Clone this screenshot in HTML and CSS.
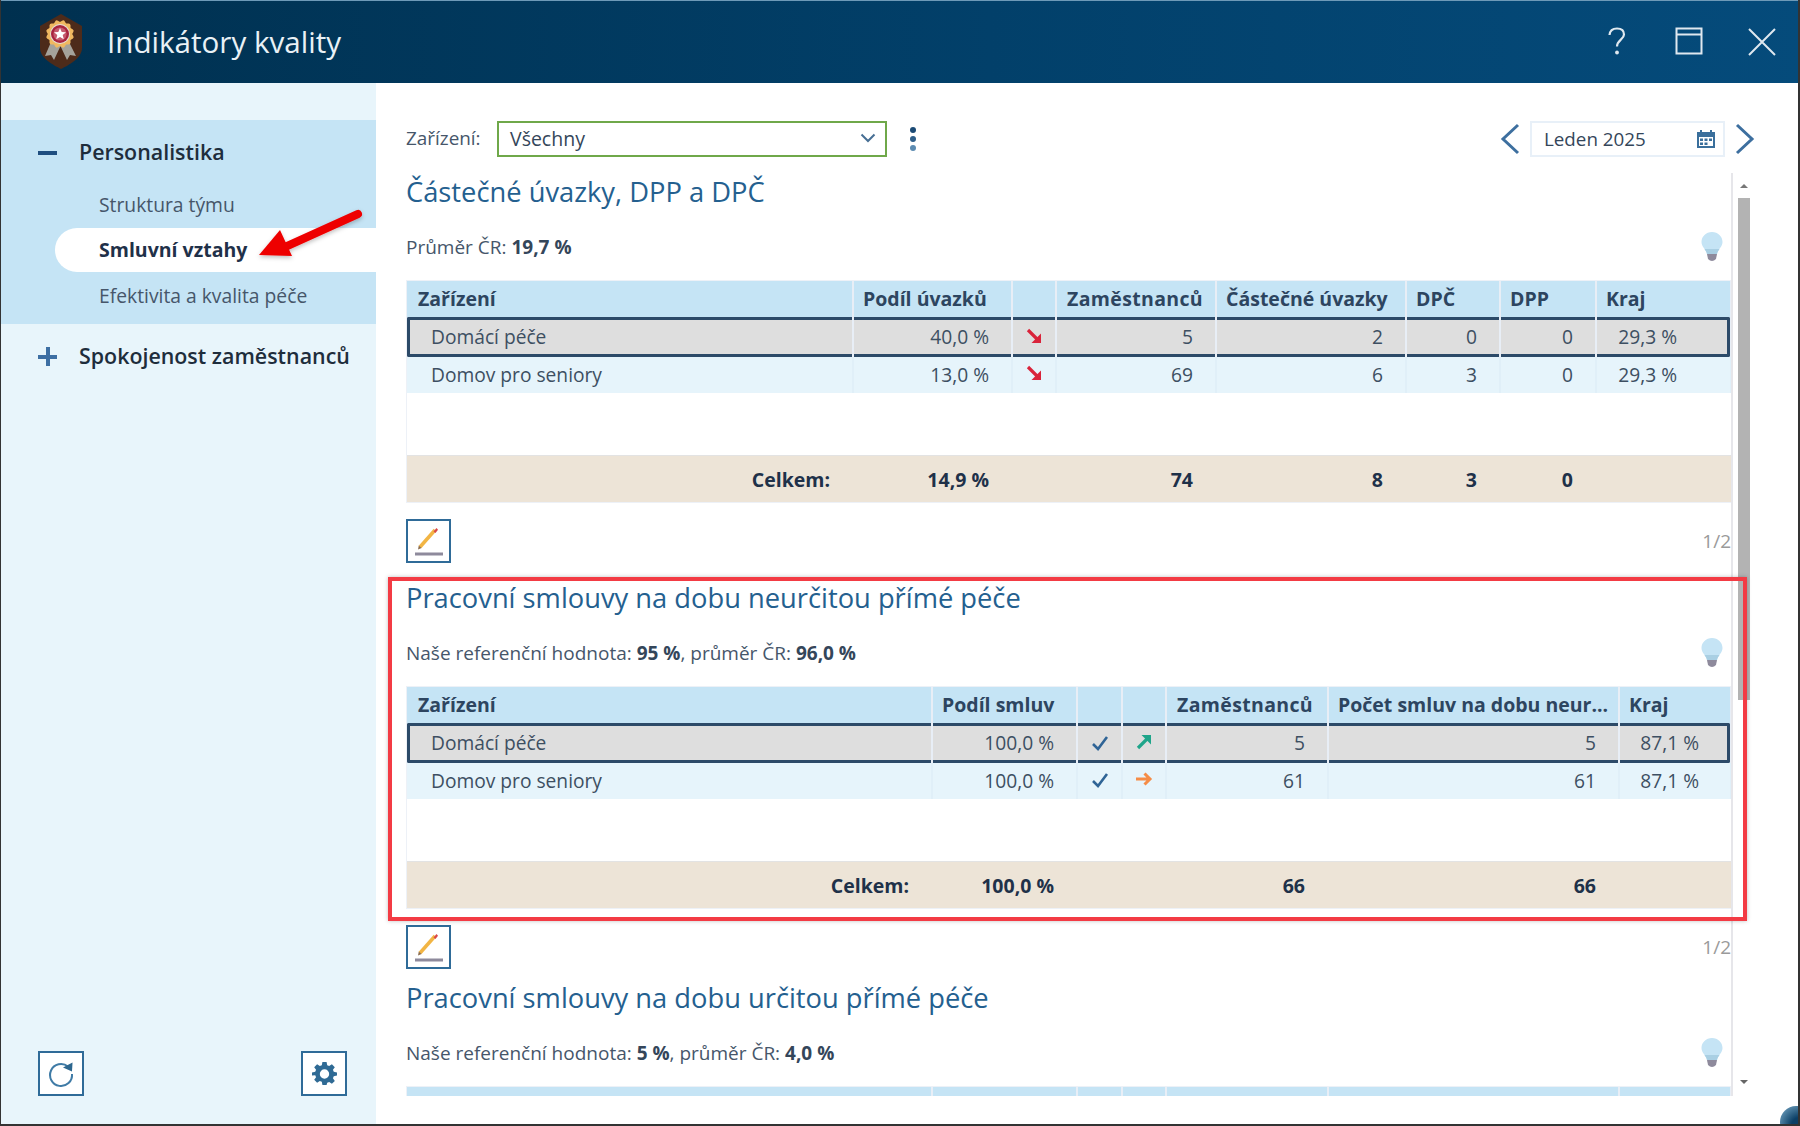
FILE: index.html
```html
<!DOCTYPE html>
<html lang="cs">
<head>
<meta charset="utf-8">
<title>Indikátory kvality</title>
<link rel="stylesheet" href="styles.css">
</head>
<body>
<div class="window">
  <header class="titlebar">
    <svg class="logo" viewBox="0 0 44 56" width="44" height="56">
      <path d="M22 0 L43 12 V34 C43 44 30 51 22 55 C14 51 1 44 1 34 V12 Z" fill="#4d2b1a"/>
      <path d="M12 28 L6 42 L12 41 L15 46 L22 31 Z M30 28 L37 42 L31 41 L28 46 L21 31 Z" fill="#a5a39b"/>
      <g fill="#f0b860">
        <rect x="10.5" y="9.5" width="21" height="21" rx="2"/>
        <rect x="10.5" y="9.5" width="21" height="21" rx="2" transform="rotate(30 21 20)"/>
        <rect x="10.5" y="9.5" width="21" height="21" rx="2" transform="rotate(60 21 20)"/>
      </g>
      <circle cx="21" cy="20" r="10" fill="#e3e0d8"/>
      <circle cx="21" cy="20" r="9" fill="#a8243f"/>
      <circle cx="21" cy="20" r="6.6" fill="#c55a6d"/>
      <path d="M21 14 L22.7 18 L27 18.3 L23.7 21.1 L24.8 25.3 L21 23 L17.2 25.3 L18.3 21.1 L15 18.3 L19.3 18 Z" fill="#fff"/>
    </svg>
    <h1 class="app-title">Indikátory kvality</h1>
    <div class="win-controls">
      <svg width="20" height="30" viewBox="0 0 20 30" class="ic-help"><path d="M2.5 8 C3 3 6 1.5 10 1.5 C14.5 1.5 17 4 17 7.5 C17 12.5 10 13 10 19.5" fill="none" stroke="#dfe8ef" stroke-width="2.2"/><circle cx="10" cy="25.5" r="1.9" fill="#dfe8ef"/></svg>
      <svg width="28" height="28" viewBox="0 0 28 28" class="ic-max"><path d="M1.5 1.5 H26.5 V26.5 H1.5 Z M1.5 7.5 H26.5" fill="none" stroke="#dfe8ef" stroke-width="2"/></svg>
      <svg width="30" height="30" viewBox="0 0 30 30" class="ic-close"><path d="M2 2 L28 28 M28 2 L2 28" stroke="#dfe8ef" stroke-width="2"/></svg>
    </div>
  </header>
  <div class="body">
    <aside class="sidebar">
      <nav class="menu">
        <section class="group open">
          <div class="group-head"><span class="sign"><span class="sign-h"></span></span>Personalistika</div>
          <div class="item">Struktura týmu</div>
          <div class="item active">Smluvní vztahy</div>
          <div class="item">Efektivita a kvalita péče</div>
        </section>
        <section class="group">
          <div class="group-head"><span class="sign plus"><span class="sign-h"></span><span class="sign-v"></span></span>Spokojenost zaměstnanců</div>
        </section>
      </nav>
      <div class="side-actions">
        <button class="icon-btn side"><svg width="28" height="28" viewBox="0 0 28 28"><path d="M21 6.5 A11 11 0 1 0 25 14" fill="none" stroke="#3f7ba6" stroke-width="2"/><path d="M16 7.5 L25.5 2.5 L25 11.5 Z" fill="#2d678f"/></svg></button>
        <button class="icon-btn side"><svg width="25" height="25" viewBox="0 0 24 24"><path fill="#2f6a94" fill-rule="evenodd" d="M10 1h4l.6 3.1 1.9.8 2.6-1.8 2.8 2.8-1.8 2.6.8 1.9L24 11v3l-3.1.6-.8 1.9 1.8 2.6-2.8 2.8-2.6-1.8-1.9.8L14 23h-4l-.6-3.1-1.9-.8-2.6 1.8-2.8-2.8 1.8-2.6-.8-1.9L0 14v-3l3.1-.6.8-1.9L2.100 5.900 4.900 3.100l2.600 1.800 1.900-.8zM12 8a4.500 4.500 0 1 0 0 9 4.500 4.500 0 0 0 0-9z"/></svg></button>
      </div>
    </aside>
    <main class="main">
      <div class="toolbar">
        <label class="tool-label">Zařízení:</label>
        <div class="select"><span>Všechny</span><svg width="16" height="10" viewBox="0 0 16 10"><path d="M1.500 1.500 L8 8 L14.500 1.500" fill="none" stroke="#476f94" stroke-width="2"/></svg></div>
        <div class="kebab"><i></i><i></i><i></i></div>
        <div class="period">
          <svg width="20" height="32" viewBox="0 0 20 32"><path d="M18 2 L3 16 L18 30" fill="none" stroke="#3d6f9f" stroke-width="3"/></svg>
          <div class="date"><span>Leden 2025</span>
            <svg width="20" height="20" viewBox="0 0 20 20"><path fill="#3a6f9c" fill-rule="evenodd" d="M1 3h3V1h2v2h8V1h2v2h3v16H1zM3 8v9h14V8z"/><path fill="#3a6f9c" d="M4 9.500h3v2.500H4zM8.500 9.500h3v2.500h-3zM13 9.500h3v2.500h-3zM4 13.500h3V16H4zM8.500 13.500h3V16h-3z"/></svg>
          </div>
          <svg width="20" height="32" viewBox="0 0 20 32"><path d="M2 2 L17 16 L2 30" fill="none" stroke="#3d6f9f" stroke-width="3"/></svg>
        </div>
      </div>
      <div class="scroller">
        <div class="content">
          <section class="block">
            <h2 class="block-title">Částečné úvazky, DPP a DPČ</h2>
            <div class="sub"><p>Průměr ČR: <b>19,7 %</b></p>
              <svg class="bulb" width="22" height="30" viewBox="0 0 22 30"><path d="M11 0 C17 0 21.500 4.500 21.500 10 C21.500 15 17 17 16 22 H6 C5 17 .5 15 .5 10 C.5 4.500 5 0 11 0 Z" fill="#c5e4f5"/><path d="M6 22 H16 C16.500 20 17.500 18.500 18.500 17 H3.500 C4.500 18.500 5.500 20 6 22 Z" fill="#a9cfe3"/><path d="M6 22 H16 L15 27 Q11 31 7 27 Z" fill="#8e8a9c"/></svg>
            </div>
            <div class="table t1">
              <div class="row head"><div class="c">Zařízení</div><div class="c">Podíl úvazků</div><div class="c"></div><div class="c wide">Zaměstnanců</div><div class="c">Částečné úvazky</div><div class="c">DPČ</div><div class="c">DPP</div><div class="c">Kraj</div></div>
              <div class="row sel"><div class="c name">Domácí péče</div><div class="c num">40,0 %</div><div class="c ico"><svg class="tr" width="16" height="16" viewBox="0 0 16 16"><path d="M2 2 L11 11" stroke="#d9233a" stroke-width="3.200"/><path d="M15 15 H5.500 L15 5.500 Z" fill="#d9233a"/></svg></div><div class="c num">5</div><div class="c num">2</div><div class="c num">0</div><div class="c num">0</div><div class="c num k1">29,3 %</div></div>
              <div class="row alt"><div class="c name">Domov pro seniory</div><div class="c num">13,0 %</div><div class="c ico"><svg class="tr" width="16" height="16" viewBox="0 0 16 16"><path d="M2 2 L11 11" stroke="#d9233a" stroke-width="3.200"/><path d="M15 15 H5.500 L15 5.500 Z" fill="#d9233a"/></svg></div><div class="c num">69</div><div class="c num">6</div><div class="c num">3</div><div class="c num">0</div><div class="c num k1">29,3 %</div></div>
              <div class="empty"></div>
              <div class="row foot"><div class="c num">Celkem:</div><div class="c num">14,9 %</div><div class="c"></div><div class="c num">74</div><div class="c num">8</div><div class="c num">3</div><div class="c num">0</div><div class="c"></div></div>
            </div>
            <div class="pager"><button class="icon-btn edit"><svg width="32" height="32" viewBox="0 0 32 32"><path d="M7 22 L22 5" stroke="#f2b544" stroke-width="3.500"/><path d="M20.500 6.500 L23.500 3 L25 4.800 L22.500 8 Z" fill="#d9484a"/><path d="M5 24.500 L5.800 20.500 L8.500 23 Z" fill="#8a6a4a"/><rect x="2" y="27.500" width="28" height="3" fill="#8e8a9c"/></svg></button><span class="pg">1/2</span></div>
          </section>
          <section class="block marked">
            <h2 class="block-title">Pracovní smlouvy na dobu neurčitou přímé péče</h2>
            <div class="sub"><p>Naše referenční hodnota: <b>95 %</b>, průměr ČR: <b>96,0 %</b></p>
              <svg class="bulb" width="22" height="30" viewBox="0 0 22 30"><path d="M11 0 C17 0 21.500 4.500 21.500 10 C21.500 15 17 17 16 22 H6 C5 17 .5 15 .5 10 C.5 4.500 5 0 11 0 Z" fill="#c5e4f5"/><path d="M6 22 H16 C16.500 20 17.500 18.500 18.500 17 H3.500 C4.500 18.500 5.500 20 6 22 Z" fill="#a9cfe3"/><path d="M6 22 H16 L15 27 Q11 31 7 27 Z" fill="#8e8a9c"/></svg>
            </div>
            <div class="table t2">
              <div class="row head"><div class="c">Zařízení</div><div class="c">Podíl smluv</div><div class="c"></div><div class="c"></div><div class="c wide">Zaměstnanců</div><div class="c">Počet smluv na dobu neur...</div><div class="c">Kraj</div></div>
              <div class="row sel"><div class="c name">Domácí péče</div><div class="c num">100,0 %</div><div class="c ico"><svg width="18" height="16" viewBox="0 0 18 16"><path d="M2 9 L7 14 L16 2" fill="none" stroke="#2f6496" stroke-width="2.600"/></svg></div><div class="c ico"><svg class="tr" width="16" height="16" viewBox="0 0 16 16"><path d="M2 14 L11 5" stroke="#1fa58a" stroke-width="3.200"/><path d="M15 1 H5.500 L15 10.500 Z" fill="#1fa58a"/></svg></div><div class="c num">5</div><div class="c num">5</div><div class="c num k2">87,1 %</div></div>
              <div class="row alt"><div class="c name">Domov pro seniory</div><div class="c num">100,0 %</div><div class="c ico"><svg width="18" height="16" viewBox="0 0 18 16"><path d="M2 9 L7 14 L16 2" fill="none" stroke="#2f6496" stroke-width="2.600"/></svg></div><div class="c ico"><svg class="tr" width="18" height="14" viewBox="0 0 18 14"><path d="M1 7 H14 M9.500 1.500 L15 7 L9.500 12.500" fill="none" stroke="#f58c46" stroke-width="3"/></svg></div><div class="c num">61</div><div class="c num">61</div><div class="c num k2">87,1 %</div></div>
              <div class="empty"></div>
              <div class="row foot"><div class="c num">Celkem:</div><div class="c num">100,0 %</div><div class="c"></div><div class="c"></div><div class="c num">66</div><div class="c num">66</div><div class="c"></div></div>
            </div>
            <div class="pager"><button class="icon-btn edit"><svg width="32" height="32" viewBox="0 0 32 32"><path d="M7 22 L22 5" stroke="#f2b544" stroke-width="3.500"/><path d="M20.500 6.500 L23.500 3 L25 4.800 L22.500 8 Z" fill="#d9484a"/><path d="M5 24.500 L5.800 20.500 L8.500 23 Z" fill="#8a6a4a"/><rect x="2" y="27.500" width="28" height="3" fill="#8e8a9c"/></svg></button><span class="pg">1/2</span></div>
          </section>
          <section class="block">
            <h2 class="block-title">Pracovní smlouvy na dobu určitou přímé péče</h2>
            <div class="sub"><p>Naše referenční hodnota: <b>5 %</b>, průměr ČR: <b>4,0 %</b></p>
              <svg class="bulb" width="22" height="30" viewBox="0 0 22 30"><path d="M11 0 C17 0 21.500 4.500 21.500 10 C21.500 15 17 17 16 22 H6 C5 17 .5 15 .5 10 C.5 4.500 5 0 11 0 Z" fill="#c5e4f5"/><path d="M6 22 H16 C16.500 20 17.500 18.500 18.500 17 H3.500 C4.500 18.500 5.500 20 6 22 Z" fill="#a9cfe3"/><path d="M6 22 H16 L15 27 Q11 31 7 27 Z" fill="#8e8a9c"/></svg>
            </div>
            <div class="table t2">
              <div class="row head"><div class="c">Zařízení</div><div class="c">Podíl smluv</div><div class="c"></div><div class="c"></div><div class="c wide">Zaměstnanců</div><div class="c">Počet smluv na dobu urč...</div><div class="c">Kraj</div></div>
            </div>
          </section>
        </div>
        <div class="scrollbar">
          <span class="arr up"></span>
          <span class="thumb"></span>
          <span class="arr down"></span>
        </div>
      </div>
    </main>
  </div>
  <svg class="callout" width="120" height="60" viewBox="0 0 120 60"><defs><filter id="sh" x="-20%" y="-20%" width="140%" height="140%"><feDropShadow dx="0" dy="2" stdDeviation="2" flood-color="#000" flood-opacity=".25"/></filter></defs><g filter="url(#sh)"><path d="M109 8 L36 41" stroke="#ee0000" stroke-width="8" stroke-linecap="round"/><path d="M10 49 L31 24 L43 50 Z" fill="#ee0000"/></g></svg>
  <span class="grip"></span>
</div>
</body>
</html>
```

FILE: styles.css
```css
* { box-sizing: border-box; }
html, body { margin: 0; padding: 0; background: #fff; }
body { font-family: "Open Sans", "Liberation Sans", sans-serif; color: #3d4f62; }
.window { position: relative; width: 1800px; height: 1126px; display: flex; flex-direction: column; border: solid #333; border-width: 0 2px 2px 1px; overflow: hidden; }

.titlebar { flex: 0 0 83px; margin-left: -1px; margin-right: -2px; display: flex; align-items: center; padding: 0 23px 0 39px; background: linear-gradient(90deg, #00304f 0%, #02406a 55%, #054b7b 100%); border-top: 1px solid #6e9ab8; }
.logo { display: block; }
.app-title { margin: 0 0 0 24px; font-size: 29.6px; font-weight: 400; color: #e9f1f6; line-height: 1; }
.win-controls { margin-left: auto; display: flex; align-items: center; }
.ic-help { margin-right: 48px; }
.ic-max { margin: -2px 44px 0 0; }

.body { flex: 1; display: flex; min-height: 0; }

.sidebar { flex: 0 0 375px; background: #e8f5fb; display: flex; flex-direction: column; justify-content: space-between; padding: 37px 0 28px; }
.group.open { background: #c5e4f5; padding-bottom: 8px; }
.group-head { height: 64px; display: flex; align-items: center; padding: 0 0 2px 37px; font-size: 21.4px; font-weight: 600; color: #1e2d3c; }
.sign { position: relative; width: 19px; height: 19px; margin: 2px 22px 0 0; flex: none; }
.sign-h { position: absolute; left: 0; right: 0; top: 8px; height: 4px; background: #1f4e80; }
.sign-v { position: absolute; top: 0; bottom: 0; left: 7.5px; width: 4px; background: #3d6fa3; }
.plus .sign-h { background: #3d6fa3; }
.item { height: 44px; display: flex; align-items: center; padding-left: 98px; font-size: 19.3px; color: #46566a; }
.item:nth-child(2) { padding-bottom: 4px; }
.item:nth-child(4) { padding-top: 2px; }
.item.active { margin-left: 54px; padding: 0 0 1px 44px; background: #fff; border-radius: 22px 0 0 22px; font-size: 19.5px; font-weight: 700; color: #1f3149; }
.side-actions { display: flex; justify-content: space-between; padding: 0 29px 0 37px; }

.icon-btn { padding: 0; background: #fff; border: 2px solid #2f6b98; display: flex; align-items: center; justify-content: center; }
.icon-btn.side { width: 46px; height: 45px; }
.icon-btn.edit { width: 45px; height: 44px; }

.main { flex: 1; min-width: 0; padding-top: 38px; display: flex; flex-direction: column; }
.toolbar { flex: 0 0 52px; display: flex; align-items: flex-start; padding: 0 43px 0 30px; }
.tool-label { width: 91px; height: 36px; line-height: 35px; font-size: 18.9px; color: #46566a; }
.select { width: 390px; height: 36px; border: 2px solid #6fa84a; display: flex; align-items: center; justify-content: space-between; padding: 0 9px 2px 11px; font-size: 19.5px; color: #34465a; }
.kebab { width: 52px; height: 36px; display: flex; flex-direction: column; align-items: center; justify-content: center; gap: 3px; }
.kebab i { width: 6px; height: 6px; border-radius: 50%; background: #2f5f8a; }
.kebab i:nth-child(1) { background: #1b4a75; }
.kebab i:nth-child(3) { background: #5c8bb1; }
.period { margin-left: auto; display: flex; align-items: center; gap: 10px; height: 36px; }
.date { width: 195px; height: 36px; border: 2px solid #e8f0f8; display: flex; align-items: center; justify-content: space-between; padding: 0 7px 0 12px; font-size: 18.8px; color: #34465a; }

.scroller { flex: 0 0 923px; display: flex; overflow: hidden; padding-left: 30px; }
.content { flex: 0 0 1325px; }
.block { position: relative; margin-bottom: 16px; }
.block:nth-child(2) { margin-bottom: 10px; }
.marked::after { content: ""; position: absolute; z-index: 2; left: -18px; top: -2px; width: 1359px; height: 344px; box-sizing: border-box; border: 4px solid #f33b44; box-shadow: 0 0 4px rgba(0,0,0,.25); pointer-events: none; }
.block-title { margin: 0; height: 38px; line-height: 37px; font-size: 27.3px; font-weight: 400; color: #24608f; }
.sub { margin-top: 21px; height: 30px; display: flex; align-items: center; justify-content: space-between; padding: 0 8px 0 0; }
.sub p { margin: 0; font-size: 19px; color: #46566a; }
.sub b { color: #34465a; }
.bulb { display: block; }

.table { margin-top: 18px; border: 1px solid #edf1f7; border-width: 1px 0 1px 1px; width: 1325px; }
.row { display: grid; column-gap: 2px; background: #e8eef6; }
.t1 .row { grid-template-columns: 445px 157px 42px 158px 188px 92px 94px 133px; }
.t2 .row { grid-template-columns: 524px 143px 43px 42px 160px 289px 110px; }
.c { display: flex; align-items: center; min-width: 0; white-space: nowrap; font-size: 19.2px; color: #3d4f62; }
.head { height: 36px; }
.head .c { background: #c5e4f5; padding: 0 0 2px 9px; font-size: 19.5px; font-weight: 700; color: #2d4560; }
.head .c:first-child { padding-left: 11px; }
.head .wide { padding-left: 10px; letter-spacing: .35px; }
.sel { height: 40px; }
.sel .c { background: #dedede; border-block: 3px solid #2c4a68; padding-bottom: 1px; }
.sel .c:first-child { border-left: 3px solid #2c4a68; border-radius: 2px 0 0 2px; padding-left: 21px; }
.sel .c:last-child { border-right: 3px solid #2c4a68; border-radius: 0 2px 2px 0; }
.alt { height: 36px; background: #e0eff8; }
.alt .c { background: #e6f4fb; padding-bottom: 2px; }
.name { padding-left: 24px; }
.num { justify-content: flex-end; padding-right: 22px; }
.sel .num:last-child { padding-right: 50px; }
.k1 { padding-right: 53px; }
.k2 { padding-right: 31px; }
.sel .k2:last-child { padding-right: 28px; }
.ico { justify-content: center; }
.tr { display: block; margin-top: -2px; }
.empty { height: 62px; background: #fff; }
.foot { height: 47px; background: #ede4d7; border-top: 1px solid #e3e3e3; }
.foot .c { font-size: 19.5px; font-weight: 700; color: #1f3149; }

.pager { margin-top: 16px; height: 44px; display: flex; align-items: center; justify-content: space-between; }
.pg { font-size: 19px; color: #9a9a9a; }

.scrollbar { position: relative; flex: 0 0 20px; border-left: 2px solid #e6e6ea; }
.thumb { position: absolute; left: 5px; top: 25px; width: 12px; height: 502px; background: #b3b3b3; }
.arr { position: absolute; left: 7px; width: 0; height: 0; border-left: 4px solid transparent; border-right: 4px solid transparent; }
.arr.up { top: 11px; border-bottom: 4px solid #777; }
.arr.down { bottom: 12px; border-top: 4px solid #666; }

.callout { position: absolute; left: 248px; top: 206px; }
.grip { position: absolute; right: -14px; bottom: -14px; width: 32px; height: 32px; border-radius: 50%; background: radial-gradient(circle at 62% 62%, #0b3f66 30%, #7fb0cd 100%); }
```
